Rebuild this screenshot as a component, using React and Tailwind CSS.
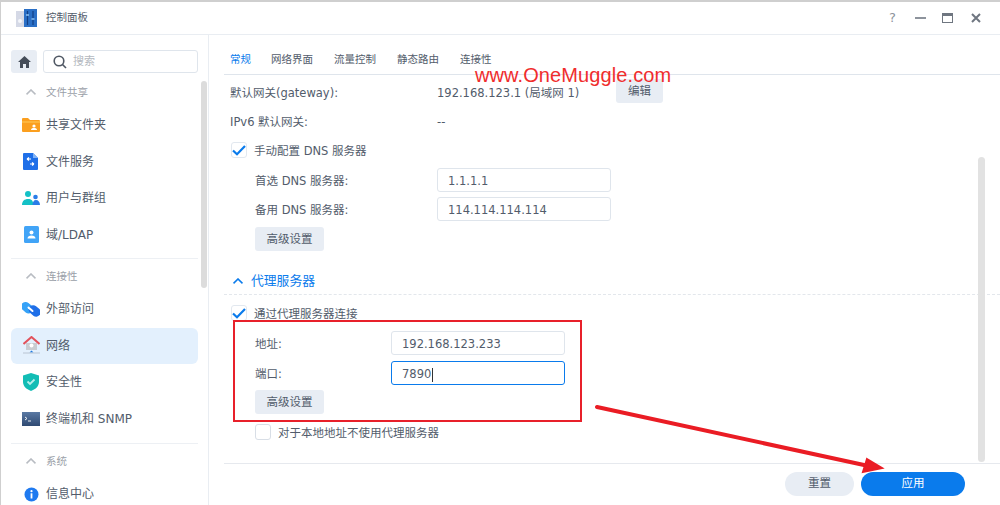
import React from 'react';

const FolderIcon = () => (
  <svg width="18" height="16" viewBox="0 0 18 16">
    <path d="M0 2a1 1 0 011-1h5l2 2h9a1 1 0 011 1v10a1 1 0 01-1 1H1a1 1 0 01-1-1z" fill="#fb9f1f" />
    <path d="M0 4h18v2H0z" fill="#fdb53c" />
    <circle cx="12" cy="9" r="1.6" fill="#fff" />
    <path d="M9 13c0-1.5 1.3-2 3-2s3 .5 3 2z" fill="#fff" />
  </svg>
);

const FileServiceIcon = () => (
  <svg width="16" height="18" viewBox="0 0 16 18">
    <path d="M1 0h9l5 5v11a1 1 0 01-1 1H1a1 1 0 01-1-1V1a1 1 0 011-1z" fill="#1f6fe8" />
    <path d="M10 0l5 5h-5z" fill="#7fb2f7" />
    <path d="M8 6H4m0 0l2-1.5M4 6l2 1.5M7 11h4m0 0L9 9.5M11 11l-2 1.5" stroke="#fff" strokeWidth="1.1" fill="none" />
  </svg>
);

const UsersIcon = () => (
  <svg width="18" height="16" viewBox="0 0 18 16">
    <circle cx="6" cy="4" r="3" fill="#14c1c6" />
    <path d="M0 15c0-4 2.500-6 6-6s5 1.500 5.500 6z" fill="#14c1c6" />
    <circle cx="13.500" cy="7" r="2.300" fill="#2a7de8" />
    <path d="M10.500 15c0-3 1.300-5 3.500-5s4 2 4 5z" fill="#2a7de8" />
  </svg>
);

const DomainIcon = () => (
  <svg width="15" height="17" viewBox="0 0 15 17">
    <rect width="15" height="17" rx="1.500" fill="#41a4f7" />
    <circle cx="7.500" cy="6.500" r="2" fill="#fff" />
    <path d="M3.500 12.500c0-2 1.800-3 4-3s4 1 4 3z" fill="#fff" />
  </svg>
);

const ExternalIcon = () => (
  <svg width="18" height="18" viewBox="0 0 18 18">
    <rect x="-1" y="3" width="13" height="9" rx="4.500" transform="rotate(40 5 7)" fill="#36a2f7" />
    <rect x="6" y="6" width="13" height="9" rx="4.500" transform="rotate(40 12 11)" fill="#1f6fe8" />
    <path d="M6.500 7.500l4 3.500" stroke="#fff" strokeWidth="2" strokeLinecap="round" />
  </svg>
);

const NetworkIcon = () => (
  <svg width="17" height="19" viewBox="0 0 17 19">
    <path d="M3 7h11v7H3z" fill="#c9ccd1" />
    <path d="M0.500 8L8.500 1l8 7" stroke="#e2525c" strokeWidth="2" fill="none" />
    <circle cx="8.500" cy="9.500" r="2" fill="#fff" />
    <path d="M6.500 16.500l2-2 2 2z" fill="#1f7ae0" />
    <path d="M0 17h17" stroke="#b9c4d2" strokeWidth="1" />
  </svg>
);

const ShieldIcon = () => (
  <svg width="16" height="18" viewBox="0 0 16 18">
    <path d="M8 0l8 2.500V9c0 4.500-4 7.500-8 9-4-1.500-8-4.500-8-9V2.500z" fill="#12bdb5" />
    <path d="M4.500 8.500l2.500 2.500 4.500-4.500" stroke="#b6f0ec" strokeWidth="1.800" fill="none" />
  </svg>
);

const TerminalIcon = () => (
  <svg width="18" height="14" viewBox="0 0 18 14">
    <defs>
      <linearGradient id="termBg" x1="0" y1="0" x2="0" y2="1">
        <stop offset="0" stopColor="#5a79a3" />
        <stop offset="1" stopColor="#2f4a72" />
      </linearGradient>
    </defs>
    <rect width="18" height="14" fill="url(#termBg)" />
    <path d="M3 5l2 1.500L3 8M6 9h3" stroke="#fff" strokeWidth="0.900" fill="none" />
  </svg>
);

const InfoIcon = () => (
  <svg width="15" height="15" viewBox="0 0 15 15">
    <circle cx="7.500" cy="7.500" r="7" fill="#1f7af0" />
    <rect x="6.600" y="6.300" width="1.800" height="5.200" fill="#fff" />
    <circle cx="7.500" cy="4.200" r="1.100" fill="#fff" />
  </svg>
);

const AppIcon = () => (
  <svg width="22" height="19" viewBox="0 0 22 19">
    <rect x="0" y="2" width="9" height="16" fill="#d5d9e6" />
    <circle cx="4" cy="12" r="2" fill="#f4f6fb" />
    <rect x="8" y="0" width="13" height="18" fill="#2a6fc6" />
    <path d="M11.500 2v14M17 2v14" stroke="#123f85" strokeWidth="1.200" />
    <path d="M10 6h3M15.500 10h3" stroke="#8ac2f5" strokeWidth="1.600" />
  </svg>
);

const Chevron = ({ className }) => (
  <svg width="10" height="6" viewBox="0 0 10 6" className={className} fill="none" stroke="currentColor" strokeWidth="1.600">
    <path d="M0.500 5.300L5 1l4.500 4.300" />
  </svg>
);

const Check = () => (
  <svg width="14" height="11" viewBox="0 0 14 11" fill="none" stroke="#0a7bec" strokeWidth="2.200">
    <path d="M1 5.500l4 3.800L13 1" />
  </svg>
);

const SideItem = ({ icon, label, active }) => (
  <div className={`flex items-center h-[36.500px] rounded-md ${active ? 'bg-[#e3f0fd]' : ''}`}>
    <div className="w-[35px] flex justify-center pl-[5px]">{icon}</div>
    <span className="text-[12px] text-[#525c6b]">{label}</span>
  </div>
);

const SideSection = ({ label }) => (
  <div className="flex items-center h-[20px]">
    <Chevron className="ml-[15px] text-[#b8bcc2]" />
    <span className="ml-[10px] pt-[2px] text-[10.500px] text-[#9aa0a8]">{label}</span>
  </div>
);

const Btn = ({ children, className = '' }) => (
  <div className={`h-[24px] pt-[2px] bg-[#e8edf4] rounded-[3px] flex items-center justify-center text-[11.500px] text-[#525c6b] ${className}`}>
    {children}
  </div>
);

const Field = ({ value, focused, label, labelWidth }) => (
  <div className="flex items-center h-[24px] pl-[31px]">
    <span className={`pt-[3px] text-[11.500px] text-[#525c6b] ${labelWidth}`}>{label}</span>
    <div className={`w-[174px] h-[24px] pt-[3px] rounded-[3px] border flex items-center pl-[10px] text-[11.500px] text-[#525c6b] bg-white ${focused ? 'border-[#0a7bec]' : 'border-[#dfe5ec]'}`}>
      {value}
      {focused && <span className="w-px h-[14px] bg-[#333] ml-px" />}
    </div>
  </div>
);

const CheckRow = ({ checked, label, className = '' }) => (
  <div className={`flex items-center ${className}`}>
    <div className={`w-[16px] h-[16px] rounded-[3px] border flex items-center justify-center bg-white ${checked ? 'border-[#e2e8ef]' : 'border-[#d8dee6]'}`}>
      {checked && <Check />}
    </div>
    <span className="ml-[7px] pt-[3px] text-[11.500px] text-[#525c6b]">{label}</span>
  </div>
);

export default function App() {
  return (
    <div
      className="relative w-[1000px] h-[505px] overflow-hidden bg-white border-t-2 border-l border-[#cfcfcf] flex flex-col"
      style={{ fontFamily: '"DejaVu Sans", "Noto Sans CJK SC", sans-serif' }}
    >
      {/* title bar */}
      <div className="h-[33px] shrink-0 flex items-center border-b border-[#e9edf2] pl-[15px] pr-[19px]">
        <AppIcon />
        <span className="ml-[8px] text-[10.500px] text-[#525c6b]">控制面板</span>
        <div className="ml-auto flex items-center text-[#8d939c]">
          <span className="text-[13px] font-medium w-[12px]">?</span>
          <div className="ml-[14px] w-[11px] h-[2px] bg-[#8d939c]" />
          <div className="ml-[16px] w-[11px] h-[10px] border border-[#6f7680] border-t-[3px]" />
          <svg className="ml-[18px]" width="10" height="10" viewBox="0 0 10 10" stroke="#6f7680" strokeWidth="2">
            <path d="M1 1l8 8M9 1l-8 8" />
          </svg>
        </div>
      </div>

      <div className="flex flex-1 min-h-0">
        {/* sidebar */}
        <div className="relative w-[208px] shrink-0 border-r border-[#e9edf2] overflow-hidden px-[10px]">
          <div className="flex gap-[6px] mt-[15px]">
            <div className="w-[26px] h-[23px] bg-[#e8edf4] rounded-[3px] flex items-center justify-center">
              <svg width="13" height="12" viewBox="0 0 13 12" fill="#454d59">
                <path d="M6.500 0L13 6h-2v6H8V8H5v4H2V6H0z" />
              </svg>
            </div>
            <div className="w-[155px] h-[23px] border border-[#dfe5ec] rounded-[3px] flex items-center pl-[9px]">
              <svg width="14" height="14" viewBox="0 0 14 14" fill="none" stroke="#4f5763" strokeWidth="1.600">
                <circle cx="6" cy="6" r="4.800" />
                <path d="M9.500 9.500L13 13" />
              </svg>
              <span className="ml-[6px] pt-px text-[11px] text-[#b4b9c0]">搜索</span>
            </div>
          </div>
          <div className="mt-[9px]">
            <SideSection label="文件共享" />
          </div>
          <div className="mt-[5px]">
            <SideItem icon={<FolderIcon />} label="共享文件夹" />
            <SideItem icon={<FileServiceIcon />} label="文件服务" />
            <SideItem icon={<UsersIcon />} label="用户与群组" />
            <SideItem icon={<DomainIcon />} label="域/LDAP" />
          </div>
          <div className="h-px bg-[#edf0f4] mt-[5px] mb-[7px]" />
          <SideSection label="连接性" />
          <div className="mt-[5px]">
            <SideItem icon={<ExternalIcon />} label="外部访问" />
            <SideItem active icon={<NetworkIcon />} label="网络" />
            <SideItem icon={<ShieldIcon />} label="安全性" />
            <SideItem icon={<TerminalIcon />} label="终端机和 SNMP" />
          </div>
          <div className="h-px bg-[#edf0f4] mt-[6px] mb-[7px]" />
          <SideSection label="系统" />
          <div className="mt-[5px]">
            <SideItem icon={<InfoIcon />} label="信息中心" />
          </div>
          {/* sidebar scrollbar */}
          <div className="absolute right-[1px] top-[46px] w-[6px] h-[207px] rounded-full bg-[#dcdcdc]" />
        </div>

        {/* main */}
        <div className="relative flex-1 min-w-0 flex flex-col pl-[15px]">
          <div className="h-[40px] shrink-0 border-b border-[#dfe5ec] flex items-end pb-[6px] gap-[21px] text-[10.500px] text-[#525c6b]">
            <span className="text-[#0a7bec] pl-[6px] -mr-px">常规</span>
            <span>网络界面</span>
            <span>流量控制</span>
            <span>静态路由</span>
            <span>连接性</span>
          </div>

          <div className="flex-1 min-h-0">
            <div className="flex items-center h-[24px] mt-[5px] pl-[6px] text-[11.500px] text-[#525c6b]">
              <span className="w-[207px] pt-[3px]">默认网关(gateway):</span>
              <span className="w-[179px] pt-[3px]">192.168.123.1 (局域网 1)</span>
              <Btn className="w-[47px] -mt-[2px]">编辑</Btn>
            </div>
            <div className="flex items-center h-[24px] mt-[5px] pl-[6px] text-[11.500px] text-[#525c6b]">
              <span className="w-[207px] pt-[3px]">IPv6 默认网关:</span>
              <span className="pt-[3px]">--</span>
            </div>
            <CheckRow checked label="手动配置 DNS 服务器" className="h-[24px] mt-[5px] pl-[7px]" />
            <div className="mt-[6px]">
              <Field label="首选 DNS 服务器:" value="1.1.1.1" labelWidth="w-[182px]" />
            </div>
            <div className="mt-[5px]">
              <Field label="备用 DNS 服务器:" value="114.114.114.114" labelWidth="w-[182px]" />
            </div>
            <Btn className="w-[69px] ml-[31px] mt-[6px]">高级设置</Btn>

            <div className="flex items-center h-[20px] mt-[20px] pl-[9px] text-[#0a7bec]">
              <Chevron />
              <span className="ml-[8px] text-[12.800px]">代理服务器</span>
            </div>
            <div className="border-t border-dashed border-[#e3e7ec] mt-[3px]" />
            <CheckRow checked label="通过代理服务器连接" className="h-[24px] mt-[6px] pl-[7px]" />
            <div className="mt-[6px]">
              <Field label="地址:" value="192.168.123.233" labelWidth="w-[136px]" />
            </div>
            <div className="mt-[6px]">
              <Field label="端口:" value="7890" focused labelWidth="w-[136px]" />
            </div>
            <Btn className="w-[69px] ml-[31px] mt-[5px]">高级设置</Btn>
            <CheckRow label="对于本地地址不使用代理服务器" className="h-[24px] mt-[6px] pl-[31px]" />
          </div>

          {/* footer */}
          <div className="h-[42px] shrink-0 border-t border-[#e6e9ee] flex items-start justify-end pt-[8px] pr-[35px] gap-[7px]">
            <div className="w-[69px] h-[24px] rounded-full bg-[#e8edf4] flex items-center justify-center text-[11.500px] text-[#525c6b]">重置</div>
            <div className="w-[104px] h-[24px] rounded-full bg-[#0a7bec] flex items-center justify-center text-[11.500px] text-white">应用</div>
          </div>

          {/* main scrollbar */}
          <div className="absolute right-[15px] top-[122px] w-[7px] h-[305px] rounded-full bg-[#e2e2e2]" />
        </div>
      </div>

      {/* annotations drawn on top of the screenshot */}
      <div className="absolute left-[474px] top-[65px] text-[20px] leading-[16px] text-[#f02d2d] tracking-[0.1px]" style={{ fontFamily: '"Liberation Sans", sans-serif' }}>
        www.OneMuggle.com
      </div>
      <div className="absolute left-[232px] top-[318px] w-[349px] h-[102px] border-2 border-[#e8202a]" />
      <svg className="absolute left-[-1px] top-[-2px]" width="1000" height="505" fill="none">
        <path d="M597 407L864 465" stroke="#ea1c24" strokeWidth="4" strokeLinecap="round" />
        <path d="M867 459L882 468L863 472Z" fill="#ea1c24" stroke="#ea1c24" strokeWidth="2" />
      </svg>
    </div>
  );
}
